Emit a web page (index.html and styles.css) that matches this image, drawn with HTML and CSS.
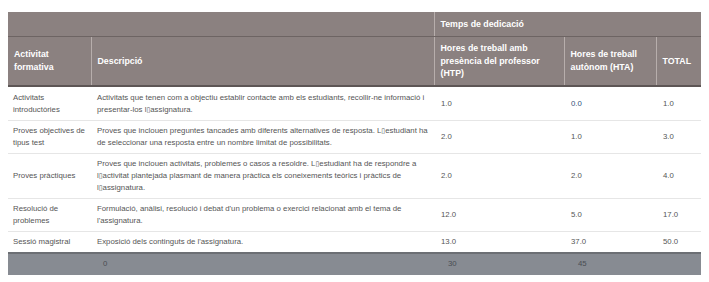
FILE: index.html
```html
<!DOCTYPE html>
<html lang="ca">
<head>
<meta charset="utf-8">
<link rel="stylesheet" href="styles.css">
</head>
<body>
<table class="dedic">
  <colgroup>
    <col class="c1"><col class="c2"><col class="c3"><col class="c4"><col class="c5">
  </colgroup>
  <thead>
    <tr class="h1">
      <th colspan="2"></th>
      <th colspan="3">Temps de dedicació</th>
    </tr>
    <tr class="h2">
      <th>Activitat formativa</th>
      <th>Descripció</th>
      <th>Hores de treball amb presència del professor (HTP)</th>
      <th>Hores de treball autònom (HTA)</th>
      <th>TOTAL</th>
    </tr>
  </thead>
  <tbody>
    <tr>
      <td>Activitats introductòries</td>
      <td>Activitats que tenen com a objectiu establir contacte amb els estudiants, recollir-ne informació i presentar-los l<span class="tofu">▯</span>assignatura.</td>
      <td>1.0</td>
      <td class="link">0.0</td>
      <td>1.0</td>
    </tr>
    <tr>
      <td>Proves objectives de tipus test</td>
      <td>Proves que inclouen preguntes tancades amb diferents alternatives de resposta. L<span class="tofu">▯</span>estudiant ha de seleccionar una resposta entre un nombre limitat de possibilitats.</td>
      <td>2.0</td>
      <td>1.0</td>
      <td>3.0</td>
    </tr>
    <tr>
      <td>Proves pràctiques</td>
      <td>Proves que inclouen activitats, problemes o casos a resoldre. L<span class="tofu">▯</span>estudiant ha de respondre a l<span class="tofu">▯</span>activitat plantejada plasmant de manera pràctica els coneixements teòrics i pràctics de l<span class="tofu">▯</span>assignatura.</td>
      <td>2.0</td>
      <td>2.0</td>
      <td>4.0</td>
    </tr>
    <tr>
      <td>Resolució de problemes</td>
      <td>Formulació, anàlisi, resolució i debat d'un problema o exercici relacionat amb el tema de l'assignatura.</td>
      <td>12.0</td>
      <td>5.0</td>
      <td>17.0</td>
    </tr>
    <tr>
      <td>Sessió magistral</td>
      <td>Exposició dels continguts de l'assignatura.</td>
      <td>13.0</td>
      <td>37.0</td>
      <td>50.0</td>
    </tr>
  </tbody>
  <tfoot>
    <tr>
      <td></td>
      <td>0</td>
      <td>30</td>
      <td>45</td>
      <td></td>
    </tr>
  </tfoot>
</table>
</body>
</html>
```
FILE: styles.css
```css
html, body {
  margin: 0;
  padding: 0;
  background: #fff;
}
body {
  padding: 12px 8px 0 8px;
  font-family: "Liberation Sans", Arial, sans-serif;
}
.dedic {
  width: 693px;
  border-collapse: collapse;
  table-layout: fixed;
  font-size: 7.8px;
  color: #555;
}
.c1 { width: 83px; }
.c2 { width: 343px; }
.c3 { width: 130px; }
.c4 { width: 92px; }
.c5 { width: 45px; }

.dedic th {
  background: #8b8180;
  color: #fff;
  font-weight: bold;
  font-size: 8.8px;
  text-align: left;
  vertical-align: middle;
  line-height: 12.6px;
  padding: 5px 6px 5px 6px;
  border-left: 1px solid #b7aeac;
}
.dedic th:first-child { border-left: none; }
.dedic .h1 th {
  height: 14px;
  border-bottom: 1px solid #6d6463;
}
.dedic .h2 th {
  border-bottom: 2px solid #5d5655;
  padding-top: 5px;
  padding-bottom: 5px;
}
.dedic td {
  vertical-align: middle;
  line-height: 12px;
  padding: 4px 6px 4px 6px;
  border-top: 1px solid #e6e6e6;
}
.dedic td:first-child { padding-left: 5px; }
.dedic tbody tr:first-child td { border-top: none; padding-top: 5px; }
.dedic td:nth-child(n+3) { padding-left: 7px; }
.link { color: #34507a; }
.tofu {
  font-family: "DejaVu Sans", sans-serif;
  font-size: 7px;
  line-height: 1;
}
.dedic tfoot td {
  background: #878b92;
  border-top: 2px solid #6c6f74;
  color: #4a4d52;
  height: 13px;
  padding-top: 4px;
  padding-bottom: 4px;
  padding-left: 12px;
}
.dedic tfoot td:nth-child(n+3) { padding-left: 14px; }
```
